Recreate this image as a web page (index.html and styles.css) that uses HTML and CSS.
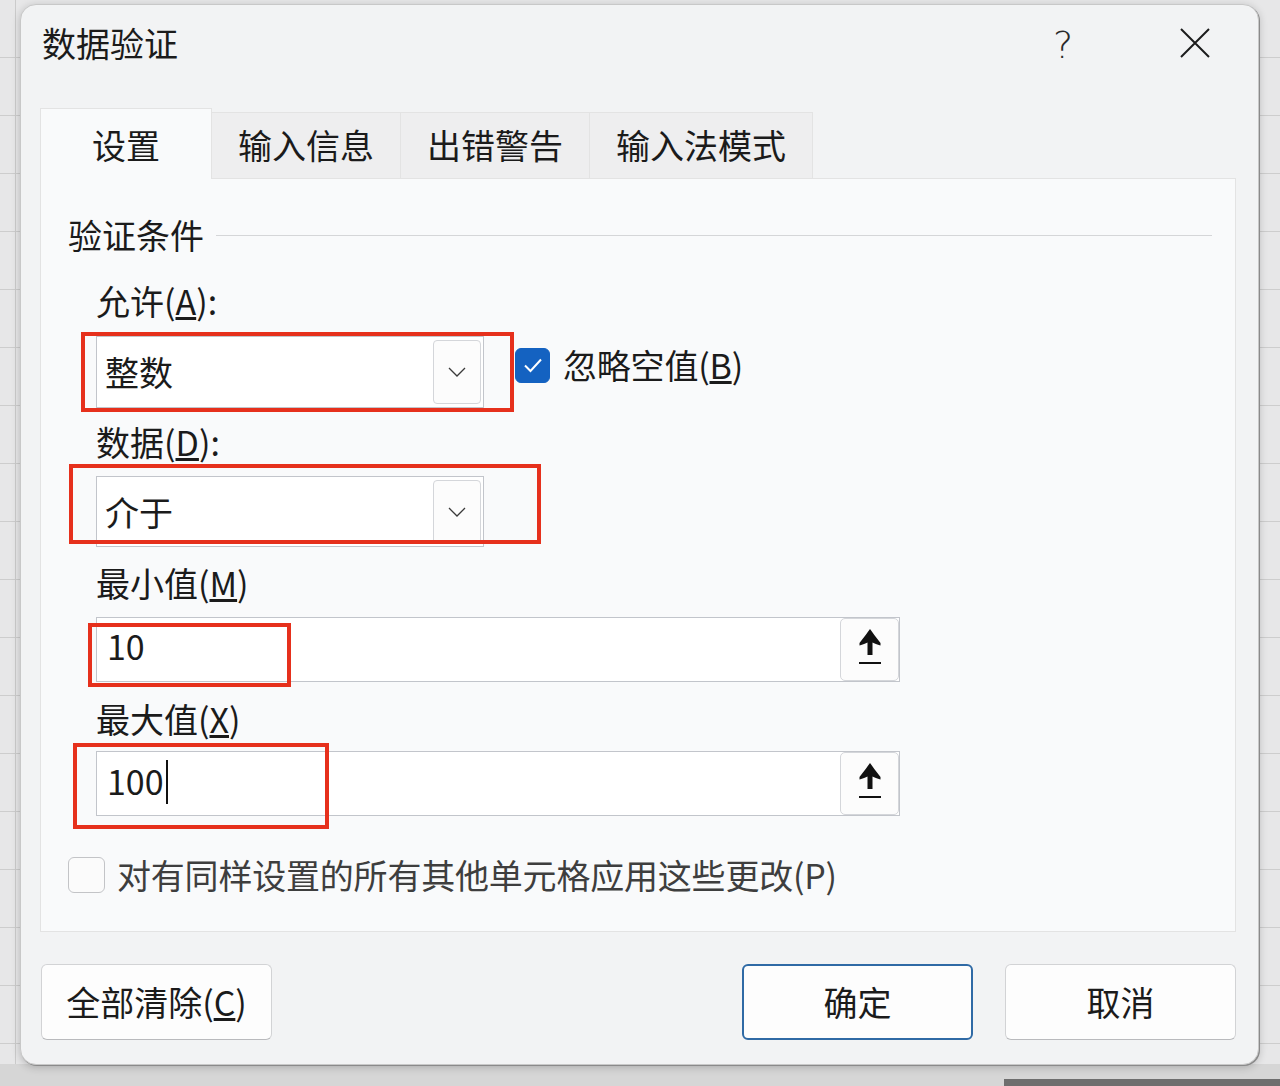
FILE: index.html
```html
<!DOCTYPE html>
<html lang="zh-CN">
<head>
<meta charset="utf-8">
<title>数据验证</title>
<link rel="stylesheet" href="styles.css">
</head>
<body>
<div class="dialog">
  <div class="titlebar">
    <div class="title">数据验证</div>
    <div class="help">?</div>
    <div class="close">
      <svg width="32" height="32" viewBox="0 0 32 32"><path d="M2 2 L30 30 M30 2 L2 30" stroke="#1c1c1c" stroke-width="2" fill="none"/></svg>
    </div>
  </div>

  <div class="tabs">
    <div class="tab active">设置</div>
    <div class="tab">输入信息</div>
    <div class="tab">出错警告</div>
    <div class="tab">输入法模式</div>
  </div>

  <div class="panel">
    <div class="group-head"><span>验证条件</span><div class="rule"></div></div>
    <div class="fields">
      <div class="label l-allow">允许(<u>A</u>):</div>
      <div class="row-allow">
        <div class="combo"><span class="value">整数</span>
          <div class="dd"><svg width="18" height="10" viewBox="0 0 18 10"><polyline points="1,1 9,9 17,1" fill="none" stroke="#3a3a3a" stroke-width="1.3"/></svg></div>
        </div>
        <div class="chk">
          <span class="box checked"><svg width="24" height="24" viewBox="0 0 24 24"><polyline points="4,12.5 9.5,18 20,6.5" fill="none" stroke="#fff" stroke-width="2"/></svg></span>
          <span class="chk-text">忽略空值(<u>B</u>)</span>
        </div>
      </div>

      <div class="label l-data">数据(<u>D</u>):</div>
      <div class="combo combo-data"><span class="value">介于</span>
        <div class="dd"><svg width="18" height="10" viewBox="0 0 18 10"><polyline points="1,1 9,9 17,1" fill="none" stroke="#3a3a3a" stroke-width="1.3"/></svg></div>
      </div>

      <div class="label l-min">最小值(<u>M</u>)</div>
      <div class="input"><span class="value">10</span>
        <div class="ref"><svg width="24" height="36" viewBox="0 0 24 36"><path d="M12 0 C14 3 18 8 22.5 14 L22.5 16.5 C19 15.5 16.5 14.5 14.5 13.5 L14.5 26 L9.5 26 L9.5 13.5 C7.5 14.5 5 15.5 1.5 16.5 L1.5 14 C6 8 10 3 12 0 Z" fill="#111"/><rect x="1" y="33" width="22" height="2" fill="#111"/></svg></div>
      </div>

      <div class="label l-max">最大值(<u>X</u>)</div>
      <div class="input input-max"><span class="value">100<span class="caret"></span></span>
        <div class="ref"><svg width="24" height="36" viewBox="0 0 24 36"><path d="M12 0 C14 3 18 8 22.5 14 L22.5 16.5 C19 15.5 16.5 14.5 14.5 13.5 L14.5 26 L9.5 26 L9.5 13.5 C7.5 14.5 5 15.5 1.5 16.5 L1.5 14 C6 8 10 3 12 0 Z" fill="#111"/><rect x="1" y="33" width="22" height="2" fill="#111"/></svg></div>
      </div>
    </div>

    <div class="chk chk-apply">
      <span class="box"></span>
      <span class="chk-text muted">对有同样设置的所有其他单元格应用这些更改(P)</span>
    </div>

    <div class="mark mark-1"></div>
    <div class="mark mark-2"></div>
    <div class="mark mark-3"></div>
    <div class="mark mark-4"></div>
  </div>

  <div class="buttons">
    <div class="btn">全部清除(<u>C</u>)</div>
    <div class="spacer"></div>
    <div class="btn primary">确定</div>
    <div class="btn">取消</div>
  </div>
</div>
</body>
</html>
```

FILE: styles.css
```css
* { box-sizing: border-box; }

html, body {
  margin: 0;
  width: 1280px;
  height: 1086px;
  overflow: hidden;
}

body {
  padding: 4px 0 0 20px;
  font-family: "Noto Sans CJK SC", "Noto Sans", sans-serif;
  color: #1b1b1b;
  background:
    linear-gradient(#6e6e6e, #6e6e6e) 1004px 1079px / 276px 7px no-repeat,
    linear-gradient(#d6d6d6, #d6d6d6) 0 1064px / 1280px 22px no-repeat,
    linear-gradient(to right, transparent 15px, #cbcbcb 15px, #cbcbcb 16px, transparent 16px) 0 0 / 20px 1086px no-repeat,
    repeating-linear-gradient(to bottom, transparent 0, transparent 57px, #cdcdcd 57px, #cdcdcd 58px),
    #e7e7e8;
}

.dialog {
  width: 1239px;
  height: 1061px;
  background: #f2f3f4;
  border: 1px solid #c8c8c8;
  border-radius: 16px;
  box-shadow: 1px 1px 0 #8a8a8a, 0 2px 8px rgba(0, 0, 0, 0.22);
  display: flex;
  flex-direction: column;
}

/* title bar */
.titlebar {
  height: 103px;
  display: flex;
  align-items: flex-start;
  padding: 18px 43px 0 21px;
}
.title {
  flex: 1;
  font-size: 34px;
  line-height: 40px;
}
.help {
  width: 40px;
  text-align: center;
  font-family: "DejaVu Sans", sans-serif;
  font-weight: 300;
  font-size: 38px;
  line-height: 44px;
  color: #2a2a2a;
  margin-right: 92px;
}
.close {
  width: 40px;
  height: 40px;
  display: flex;
  align-items: center;
  justify-content: center;
}

/* tabs */
.tabs {
  display: flex;
  align-items: flex-end;
  padding-left: 19px;
  height: 71px;
  margin-bottom: -1px;
  position: relative;
  z-index: 1;
}
.tab {
  height: 67px;
  padding: 0 26px;
  font-size: 34px;
  line-height: 64px;
  background: #eeeeef;
  border: 1px solid #e3e3e3;
  border-left: none;
}
.tab.active {
  height: 71px;
  padding: 0 51px;
  line-height: 72px;
  background: #f9fafb;
  border: 1px solid #e3e3e3;
  border-bottom: none;
}

/* panel */
.panel {
  position: relative;
  height: 754px;
  margin: 0 22px 0 19px;
  background: #f9fafb;
  border: 1px solid #e3e3e3;
  padding: 36px 0 0 27px;
}
.group-head {
  display: flex;
  align-items: center;
  font-size: 34px;
  line-height: 40px;
  height: 40px;
}
.rule {
  flex: 1;
  height: 1px;
  background: #d5d6d8;
  margin: 0 23px 0 12px;
}
.fields {
  margin-left: 28px;
  display: flex;
  flex-direction: column;
  align-items: flex-start;
}
.label {
  font-size: 34px;
  line-height: 40px;
  height: 40px;
}
.l-allow { margin-top: 26px; }
.l-data { margin-top: 14px; }
.l-min { margin-top: 16px; }
.l-max { margin-top: 17px; }

.row-allow {
  display: flex;
  align-items: flex-start;
  margin-top: 15px;
}

.combo {
  width: 388px;
  height: 72px;
  background: #fff;
  border: 1px solid #c2c5cb;
  display: flex;
  align-items: center;
  padding-left: 8px;
}
.combo-data {
  margin-top: 14px;
  height: 71px;
}
.value {
  font-size: 34px;
  line-height: 40px;
}
.dd {
  margin-left: auto;
  margin-right: 2px;
  width: 48px;
  height: 64px;
  border: 1px solid #d4d6da;
  border-radius: 4px;
  background: #fcfcfc;
  display: flex;
  align-items: center;
  justify-content: center;
}

.input {
  width: 804px;
  height: 65px;
  margin-top: 14px;
  background: #fff;
  border: 1px solid #c2c5cb;
  display: flex;
  align-items: center;
  padding-left: 10px;
}
.input .value { padding-bottom: 8px; }
.input-max { margin-top: 12px; }
.input-max .value { padding-bottom: 2px; }
.caret {
  display: inline-block;
  width: 2px;
  height: 44px;
  background: #111;
  vertical-align: middle;
  margin-left: 2px;
  margin-top: -6px;
}
.ref {
  margin-left: auto;
  width: 59px;
  height: 63px;
  border: 1px solid #d4d6da;
  border-radius: 5px;
  background: #fcfcfc;
  display: flex;
  align-items: center;
  justify-content: center;
  padding-bottom: 6px;
}

/* checkboxes */
.chk {
  display: flex;
  align-items: center;
  margin-left: 31px;
  margin-top: 9px;
}
.box {
  width: 35px;
  height: 35px;
  border-radius: 6px;
  border: 1px solid #a9abaf;
  background: #fbfbfb;
  display: flex;
  align-items: center;
  justify-content: center;
  margin-right: 13px;
}
.box.checked {
  background: #1462c1;
  border-color: #1462c1;
}
.chk-text {
  font-size: 34px;
  line-height: 40px;
  letter-spacing: -0.2px;
}
.chk-apply {
  margin: 39px 0 0 0;
}
.chk-apply .box {
  width: 37px;
  height: 36px;
  border-color: #c3c4c7;
  margin-right: 12px;
}
.muted { color: #3e3e3e; }

/* red annotation boxes */
.mark {
  position: absolute;
  border: 4px solid #e6301c;
  z-index: 2;
}
.mark-1 { left: 40px; top: 153px; width: 433px; height: 80px; }
.mark-2 { left: 28px; top: 285px; width: 472px; height: 80px; }
.mark-3 { left: 47px; top: 444px; width: 203px; height: 64px; }
.mark-4 { left: 32px; top: 564px; width: 256px; height: 86px; }

/* bottom buttons */
.buttons {
  display: flex;
  gap: 32px;
  margin: 32px 22px 0 20px;
}
.spacer { flex: 1; }
.btn {
  width: 231px;
  height: 76px;
  border: 1px solid #d2d3d5;
  border-bottom-color: #b9babd;
  border-radius: 6px;
  background: #fdfdfd;
  font-size: 34px;
  line-height: 74px;
  text-align: center;
}
.btn.primary {
  border: 2px solid #2f6aa5;
  line-height: 72px;
}
.buttons .spacer + .btn { margin-left: -32px; }
.buttons .btn:first-child { margin-right: -32px; }
```
